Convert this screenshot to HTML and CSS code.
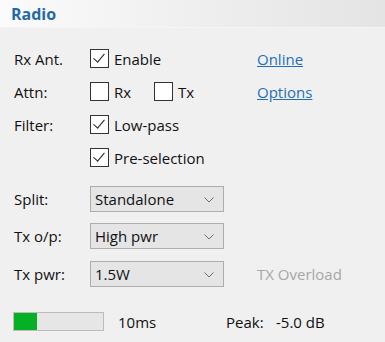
FILE: index.html
```html
<!DOCTYPE html>
<html lang="en">

<head>
    <meta charset="UTF-8">
    <title>Radio</title>
    <link rel="stylesheet" href="styles.css">
</head>

<body>
    <div class="header">
        <h1 class="title">Radio</h1>
    </div>

    <div class="panel">
        <div class="row">
            <span class="label">Rx Ant.</span>
            <div class="controls">
                <label class="check"><span class="box checked"></span>Enable</label>
            </div>
            <a class="link" href="#">Online</a>
        </div>
        <div class="row">
            <span class="label">Attn:</span>
            <div class="controls">
                <label class="check"><span class="box"></span>Rx</label>
                <label class="check second"><span class="box"></span>Tx</label>
            </div>
            <a class="link" href="#">Options</a>
        </div>
        <div class="row">
            <span class="label">Filter:</span>
            <div class="controls">
                <label class="check"><span class="box checked"></span>Low-pass</label>
            </div>
        </div>
        <div class="row">
            <span class="label"></span>
            <div class="controls">
                <label class="check"><span class="box checked"></span>Pre-selection</label>
            </div>
        </div>

        <div class="selects">
            <div class="row sel-row">
                <span class="label">Split:</span>
                <div class="select">Standalone
                    <svg class="chev" width="10" height="6" viewBox="0 0 10 6"><polyline points="0.5,0.5 5,5 9.5,0.5" /></svg>
                </div>
            </div>
            <div class="row sel-row">
                <span class="label">Tx o/p:</span>
                <div class="select">High pwr
                    <svg class="chev" width="10" height="6" viewBox="0 0 10 6"><polyline points="0.5,0.5 5,5 9.5,0.5" /></svg>
                </div>
            </div>
            <div class="row sel-row">
                <span class="label">Tx pwr:</span>
                <div class="select">1.5W
                    <svg class="chev" width="10" height="6" viewBox="0 0 10 6"><polyline points="0.5,0.5 5,5 9.5,0.5" /></svg>
                </div>
                <span class="muted">TX Overload</span>
            </div>
        </div>

        <div class="status">
            <div class="bar"><div class="fill" style="width: 26%;"></div></div>
            <span class="ms">10ms</span>
            <span class="peak">Peak:</span>
            <span class="db">-5.0 dB</span>
        </div>
    </div>
</body>

</html>
```

FILE: styles.css
```css
/* page */
body {
    margin: 0;
    background: #f0f0f0;
    font-family: "Open Sans", "Noto Sans", sans-serif;
    font-size: 15px;
    color: #111;
    width: 385px;
    height: 342px;
    overflow: hidden;
}

/* header strip */
.header {
    height: 27px;
    background: linear-gradient(to right, #fbfbfb 0%, #f0f0f0 45%, #e4e4e4 100%);
    border-bottom: 1px solid #f5f5f5;
    display: flex;
    align-items: center;
    padding-left: 11px;
}

.title {
    margin: 0;
    font-size: 16px;
    font-weight: bold;
    color: #1f6aa5;
}

.panel {
    padding: 14px 0 0 14px;
}

.row {
    display: flex;
    align-items: center;
    height: 33px;
}

.label {
    width: 76px;
    flex-shrink: 0;
}

.controls {
    width: 167px;
    flex-shrink: 0;
    display: flex;
    align-items: center;
}

.check {
    display: flex;
    align-items: center;
    gap: 5px;
}

.check.second {
    margin-left: 23px;
}

.box {
    width: 17px;
    height: 17px;
    border: 1px solid #333;
    background: #fff;
    position: relative;
}

.box.checked::after {
    content: "";
    position: absolute;
    left: 5px;
    top: 1px;
    width: 5px;
    height: 10px;
    border-right: 1.5px solid #222;
    border-bottom: 1.5px solid #222;
    transform: rotate(40deg);
}

.link {
    color: #1f6fb5;
    text-decoration: underline;
}

.selects {
    margin-top: 6px;
}

.sel-row {
    height: 37.5px;
}

.select {
    width: 128px;
    height: 24px;
    border: 1px solid #adadad;
    background: #e5e5e5;
    display: flex;
    align-items: center;
    padding-left: 4px;
    position: relative;
}

.chev {
    position: absolute;
    right: 9px;
    top: 10px;
    fill: none;
    stroke: #6d6d6d;
    stroke-width: 1;
}

.muted {
    margin-left: 33px;
    color: #a6a6a6;
}

/* level meter line */
.status {
    display: grid;
    grid-template-columns: 91px 122px 50px auto;
    align-items: center;
    margin-top: 19px;
    margin-left: -1px;
}

.bar {
    width: 89px;
    height: 17px;
    border: 1px solid #bcbcbc;
    background: #e6e6e6;
}

.fill {
    height: 100%;
    background: #06b025;
}

.ms {
    margin-left: 14px;
}
```
